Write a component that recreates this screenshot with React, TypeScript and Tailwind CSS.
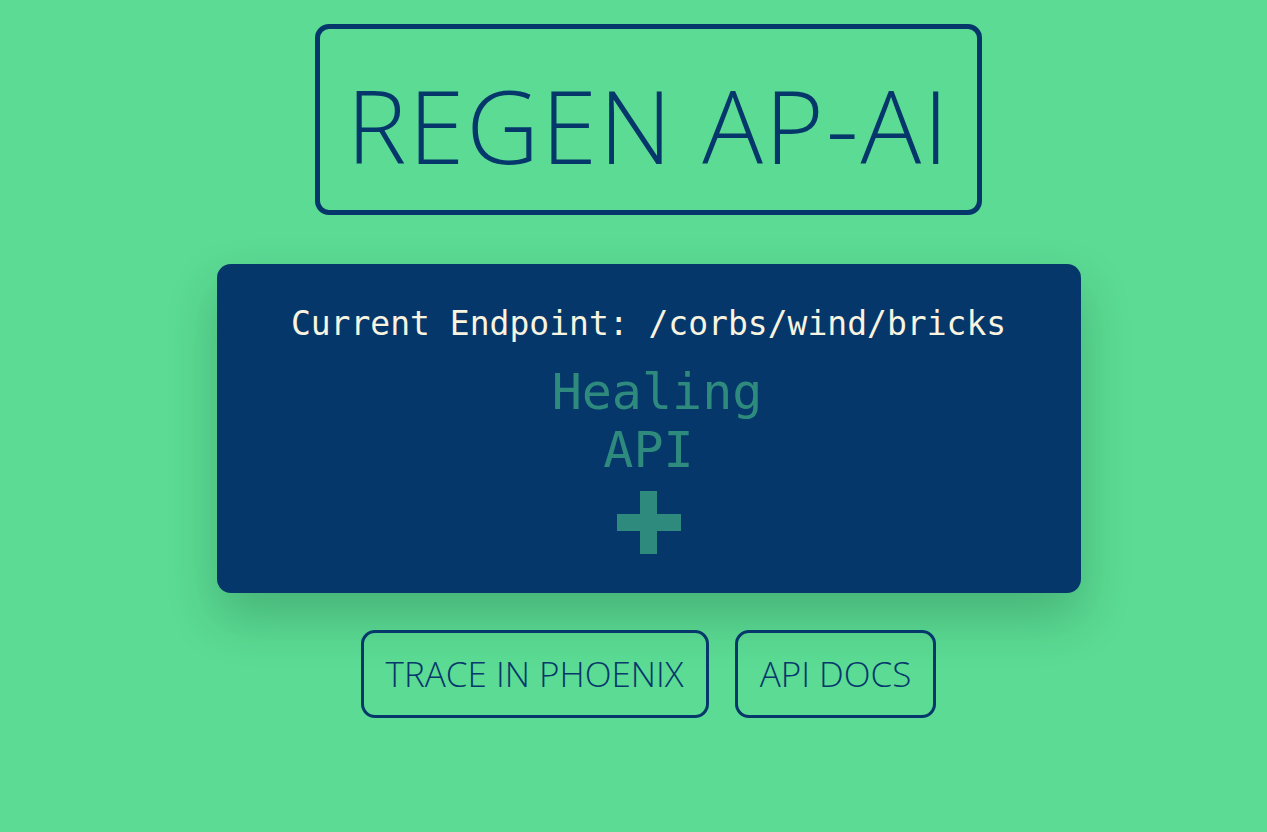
import { useState } from "react";

const mono = { fontFamily: '"DejaVu Sans Mono", "Liberation Mono", monospace' };

function Plus() {
  return (
    <svg width="64" height="63" viewBox="0 0 64 63" className="block">
      <rect x="23" y="0" width="17" height="63" fill="#2e8a7c" />
      <rect x="0" y="23" width="64" height="17" fill="#2e8a7c" />
    </svg>
  );
}

export default function App() {
  const [endpoint] = useState("/corbs/wind/bricks");

  return (
    <div
      className="min-h-[832px] bg-[#5bdb94] flex flex-col items-center pl-[30px] pt-[24px]"
      style={{ fontFamily: '"Open Sans", "Liberation Sans", sans-serif' }}
    >
      <div className="w-[667px] h-[191px] border-[5px] border-[#05376b] rounded-[14px] flex items-center justify-center pt-[12px]">
        <h1 className="text-[#05376b] text-[101px] font-light leading-none tracking-[2px]">
          REGEN AP-AI
        </h1>
      </div>

      <div className="mt-[49px] w-[864px] h-[329px] bg-[#05376b] rounded-[14px] shadow-[0_24px_50px_rgba(0,40,20,0.22)] flex flex-col items-center pt-[36px]">
        <p className="text-[#f8f4e0] text-[33px] leading-[48px]" style={mono}>
          Current Endpoint: {endpoint}
        </p>
        <div className="mt-[15px] text-[#2e8a7c] text-[50px] leading-[58px] text-center" style={mono}>
          <div className="pl-[17px]">Healing</div>
          <div>API</div>
        </div>
        <div className="mt-[12px]">
          <Plus />
        </div>
      </div>

      <div className="mt-[37px] flex gap-[26px]">
        <button className="h-[88px] px-[22px] border-[3px] border-[#05376b] rounded-[14px] text-[#05376b] text-[35px] font-light">
          TRACE IN PHOENIX
        </button>
        <button className="h-[88px] px-[22px] border-[3px] border-[#05376b] rounded-[14px] text-[#05376b] text-[35px] font-light">
          API DOCS
        </button>
      </div>
    </div>
  );
}
